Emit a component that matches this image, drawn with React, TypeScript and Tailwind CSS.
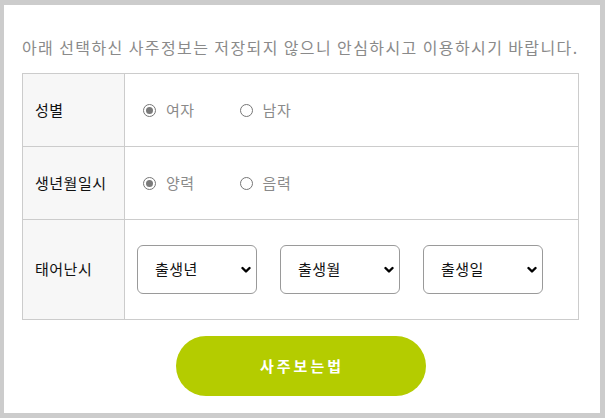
import React from "react";

const font = { fontFamily: '"Noto Sans CJK KR", "Noto Sans", sans-serif' };

function Radio({ checked, label }: { checked?: boolean; label: string }) {
  return (
    <div className="flex items-center">
      <span className="flex h-[13px] w-[13px] items-center justify-center rounded-full border border-[#767676] bg-white">
        {checked && <span className="h-[7px] w-[7px] rounded-full bg-[#7a7a7a]" />}
      </span>
      <span className="ml-[10px] text-[15px] tracking-[0.5px] text-[#8a8a8a]">{label}</span>
    </div>
  );
}

function Select({ label }: { label: string }) {
  return (
    <div className="flex h-[49px] w-[120px] items-center justify-between rounded-[6px] border border-[#9a9a9a] bg-white pl-[17px] pr-[5px]">
      <span className="text-[15px] tracking-[0.5px] text-[#111]">{label}</span>
      <svg width="10" height="8" viewBox="0 0 10 8">
        <path d="M1.5 2 L5 5.5 L8.5 2" fill="none" stroke="#000" strokeWidth="2.4" strokeLinecap="round" strokeLinejoin="round" />
      </svg>
    </div>
  );
}

export default function App() {
  return (
    <div className="h-[418px] w-[605px] bg-[#cccccc] pb-[5px] pl-[4px] pr-[5px] pt-[5px]" style={font}>
      <div className="flex h-full flex-col bg-white pl-[18px] pr-[21px] pt-[30px]">
        <p className="text-[16px] leading-[24px] text-[#8a8a8a] tracking-[1.4px] whitespace-nowrap">
          아래 선택하신 사주정보는 저장되지 않으니 안심하시고 이용하시기 바랍니다.
        </p>
        <div className="mt-[14px] border border-[#cccccc]">
          <div className="flex h-[72px]">
            <div className="flex w-[102px] items-center border-r border-[#cccccc] bg-[#f7f7f7] pl-[12px] text-[15px] tracking-[0.5px] text-[#111]">
              성별
            </div>
            <div className="flex items-center gap-[45px] pl-[18px]">
              <Radio checked label="여자" />
              <Radio label="남자" />
            </div>
          </div>
          <div className="flex h-[73px] border-t border-[#cccccc]">
            <div className="flex w-[102px] items-center border-r border-[#cccccc] bg-[#f7f7f7] pl-[12px] text-[15px] tracking-[0.5px] text-[#111]">
              생년월일시
            </div>
            <div className="flex items-center gap-[45px] pl-[18px]">
              <Radio checked label="양력" />
              <Radio label="음력" />
            </div>
          </div>
          <div className="flex h-[100px] border-t border-[#cccccc]">
            <div className="flex w-[102px] items-center border-r border-[#cccccc] bg-[#f7f7f7] pl-[12px] text-[15px] tracking-[0.5px] text-[#111]">
              태어난시
            </div>
            <div className="flex items-center gap-[23px] pl-[12px]">
              <Select label="출생년" />
              <Select label="출생월" />
              <Select label="출생일" />
            </div>
          </div>
        </div>
        <div className="mt-[16px] flex justify-center">
          <button className="h-[60px] w-[250px] rounded-full bg-[#b4cc00] pl-[3px] text-[15px] font-semibold tracking-[3px] text-white">
            사주보는법
          </button>
        </div>
      </div>
    </div>
  );
}
